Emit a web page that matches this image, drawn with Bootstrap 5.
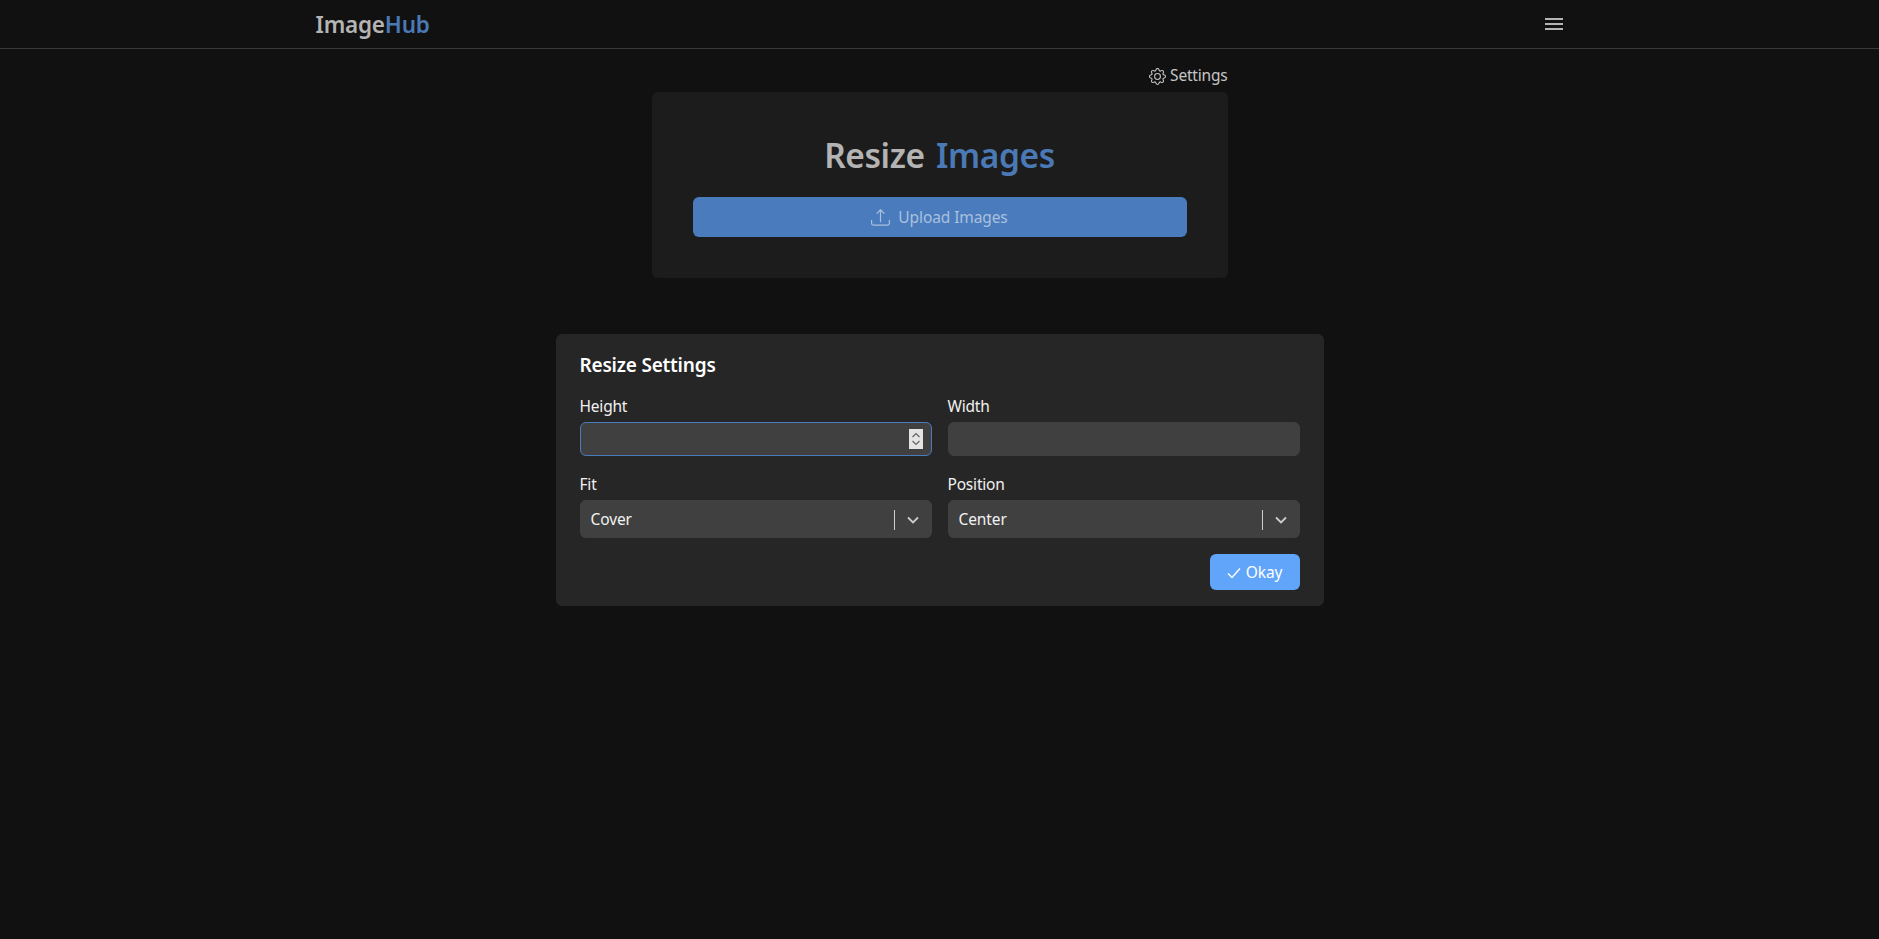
<!DOCTYPE html>
<html lang="en">
<head>
    <meta charset="utf-8">
    <title>ImageHub - Resize Images</title>
    <link href="https://cdn.jsdelivr.net/npm/bootstrap@5.3.0/dist/css/bootstrap.min.css" rel="stylesheet">
    <style>
        body { background: #111111; color: #e5e5e5; font-family: "Noto Sans", "Open Sans", sans-serif; min-height: 100vh; }
        .top-bar { height: 49px; padding: 0; border-bottom: 1px solid #3a3a3a; background: #111111; }
        .wrap-wide { max-width: 1280px; padding: 0 16px; }
        .logo { font-size: 22.5px; font-weight: 600; color: #b4b4b4; letter-spacing: -.2px; padding: 2px 0 0; margin: 0; }
        .logo span, .heading span { color: #4a79b5; }
        .menu-btn { color: #b4b4b4; border: 0; background: none; padding: 0; line-height: 0; margin-right: 1px; }
        .upload-col { width: 576px; }
        .settings-link { color: #c4c4c4; font-size: 15.5px; height: 43px; padding-top: 15px; letter-spacing: -.2px; text-decoration: none; }
        .upload-box { background: #1c1c1c; border-radius: 6px; height: 186px; padding: 40px 41px 0; border: 0; }
        .heading { font-size: 33.5px; font-weight: 600; color: #b4b4b4; line-height: 46px; margin-bottom: 19px; letter-spacing: -.4px; word-spacing: 3px; }
        .upload-btn { background: #4a7cbd; border: 0; color: #a9c0de; height: 40px; padding-top: 7px; font-size: 15.5px; border-radius: 6px; letter-spacing: -.1px; }
        .settings-box { width: 768px; margin-top: 56px; background: #262626; border: 0; border-radius: 6px; padding: 18px 24px 16px; color: #f1f1f1; }
        .settings-title { font-size: 19px; font-weight: 600; line-height: 26px; margin-bottom: 18px; letter-spacing: -.2px; color: #fff; }
        .field-row { --bs-gutter-x: 16px; --bs-gutter-y: 18px; }
        .field-label { font-size: 15.5px; line-height: 20px; margin-bottom: 6px; letter-spacing: -.2px; }
        .num-input, .num-input:focus { background: #404040; border: 1px solid #404040; border-radius: 6px; height: 34px; color: #fff; box-shadow: none; }
        .num-input.is-on, .num-input.is-on:focus { border-color: #4a7cbd; }
        .num-input::-webkit-inner-spin-button { opacity: 0; }
        .num-wrap { position: relative; }
        .spin-mark { position: absolute; right: 9px; top: 7px; width: 14px; height: 20px; background: #e4e4e4; line-height: 0; }
        .pick { background: #404040; border-radius: 6px; height: 38px; padding: 1px 10px 0 11px; font-size: 15.5px; letter-spacing: -.1px; }
        .pick-sep { width: 1px; height: 20px; background: #cfcfcf; }
        .pick-arrow { color: #cccccc; margin: 0 2px 0 11px; }
        .okay-btn { background: #60a5fa; border: 0; color: #fff; height: 36px; width: 90px; font-size: 15.5px; border-radius: 6px; padding: 1px 1px 0 0; letter-spacing: -.1px; }
        .okay-btn:hover { background: #60a5fa; color: #fff; }
    </style>
</head>
<body>

    <!-- Barra superior -->
    <nav class="navbar top-bar">
        <div class="container-fluid wrap-wide mx-auto d-flex justify-content-between align-items-center">
            <a class="navbar-brand logo" href="#">Image<span>Hub</span></a>
            <button class="menu-btn" type="button" aria-label="Menu">
                <svg width="18" height="14" viewBox="0 0 18 14" fill="none" stroke="currentColor" stroke-width="2"><path d="M0 2h18M0 7h18M0 12h18"/></svg>
            </button>
        </div>
    </nav>

    <main class="d-flex flex-column align-items-center">
        <div class="upload-col">
            <div class="d-flex justify-content-end">
                <a class="settings-link d-flex align-items-start gap-1" href="#">
                    <svg class="mt-1" width="17" height="17" viewBox="0 0 16 16" fill="currentColor">
                        <path d="M8 4.754a3.246 3.246 0 1 0 0 6.492 3.246 3.246 0 0 0 0-6.492zM5.754 8a2.246 2.246 0 1 1 4.492 0 2.246 2.246 0 0 1-4.492 0z"/>
                        <path d="M9.796 1.343c-.527-1.79-3.065-1.79-3.592 0l-.094.319a.873.873 0 0 1-1.255.52l-.292-.16c-1.64-.892-3.433.902-2.54 2.541l.159.292a.873.873 0 0 1-.52 1.255l-.319.094c-1.79.527-1.79 3.065 0 3.592l.319.094a.873.873 0 0 1 .52 1.255l-.16.292c-.892 1.64.901 3.434 2.541 2.54l.292-.159a.873.873 0 0 1 1.255.52l.094.319c.527 1.79 3.065 1.79 3.592 0l.094-.319a.873.873 0 0 1 1.255-.52l.292.16c1.64.893 3.434-.902 2.54-2.541l-.159-.292a.873.873 0 0 1 .52-1.255l.319-.094c1.79-.527 1.79-3.065 0-3.592l-.319-.094a.873.873 0 0 1-.52-1.255l.16-.292c.893-1.64-.902-3.433-2.541-2.54l-.292.159a.873.873 0 0 1-1.255-.52l-.094-.319zm-2.633.283c.246-.835 1.428-.835 1.674 0l.094.319a1.873 1.873 0 0 0 2.693 1.115l.291-.16c.764-.415 1.6.42 1.184 1.185l-.159.292a1.873 1.873 0 0 0 1.116 2.692l.318.094c.835.246.835 1.428 0 1.674l-.319.094a1.873 1.873 0 0 0-1.115 2.693l.16.291c.415.764-.42 1.6-1.185 1.184l-.291-.159a1.873 1.873 0 0 0-2.693 1.116l-.094.318c-.246.835-1.428.835-1.674 0l-.094-.319a1.873 1.873 0 0 0-2.692-1.115l-.292.16c-.764.415-1.6-.42-1.184-1.185l.159-.291A1.873 1.873 0 0 0 1.945 8.93l-.319-.094c-.835-.246-.835-1.428 0-1.674l.319-.094A1.873 1.873 0 0 0 3.06 4.377l-.16-.292c-.415-.764.42-1.6 1.185-1.184l.292.159a1.873 1.873 0 0 0 2.692-1.115l.094-.319z"/>
                    </svg>
                    Settings
                </a>
            </div>

            <!-- Subir imagenes -->
            <div class="card upload-box text-center">
                <h1 class="heading">Resize <span>Images</span></h1>
                <button type="button" class="btn upload-btn w-100 d-flex align-items-center justify-content-center gap-2">
                    <svg width="19" height="19" viewBox="0 0 16 16" fill="currentColor">
                        <path d="M.5 9.9a.5.5 0 0 1 .5.5v2.5a1 1 0 0 0 1 1h12a1 1 0 0 0 1-1v-2.5a.5.5 0 0 1 1 0v2.5a2 2 0 0 1-2 2H2a2 2 0 0 1-2-2v-2.5a.5.5 0 0 1 .5-.5z"/>
                        <path d="M7.646 1.146a.5.5 0 0 1 .708 0l3 3a.5.5 0 0 1-.708.708L8.5 2.707V11.5a.5.5 0 0 1-1 0V2.707L5.354 4.854a.5.5 0 1 1-.708-.708l3-3z"/>
                    </svg>
                    Upload Images
                </button>
            </div>
        </div>

        <!-- Ajustes -->
        <form class="card settings-box">
            <h2 class="settings-title">Resize Settings</h2>
            <div class="row field-row">
                <div class="col-6">
                    <label class="form-label field-label d-block" for="height">Height</label>
                    <div class="num-wrap">
                        <input class="form-control num-input is-on" id="height" type="number">
                        <span class="spin-mark">
                            <svg width="14" height="20" viewBox="0 0 14 20" fill="none" stroke="#666" stroke-width="1.2"><path d="M3.5 8l3.5-3.5L10.500 8M3.500 12l3.500 3.500 3.500-3.500"/></svg>
                        </span>
                    </div>
                </div>
                <div class="col-6">
                    <label class="form-label field-label d-block" for="width">Width</label>
                    <input class="form-control num-input" id="width" type="number">
                </div>
                <div class="col-6">
                    <div class="field-label">Fit</div>
                    <div class="pick d-flex align-items-center">
                        <span class="flex-grow-1">Cover</span>
                        <span class="pick-sep"></span>
                        <svg class="pick-arrow" width="14" height="14" viewBox="0 0 14 14" fill="none" stroke="currentColor" stroke-width="1.8"><path d="M2 4.5l5 5 5-5"/></svg>
                    </div>
                </div>
                <div class="col-6">
                    <div class="field-label">Position</div>
                    <div class="pick d-flex align-items-center">
                        <span class="flex-grow-1">Center</span>
                        <span class="pick-sep"></span>
                        <svg class="pick-arrow" width="14" height="14" viewBox="0 0 14 14" fill="none" stroke="currentColor" stroke-width="1.8"><path d="M2 4.5l5 5 5-5"/></svg>
                    </div>
                </div>
            </div>
            <div class="d-flex justify-content-end mt-3">
                <button type="button" class="btn okay-btn d-flex align-items-center justify-content-center gap-1">
                    <svg width="16" height="16" viewBox="0 0 16 16" fill="none" stroke="currentColor" stroke-width="1.4"><path d="M2 8.500l4 4 8-9"/></svg>
                    Okay
                </button>
            </div>
        </form>
    </main>

    <script src="https://cdn.jsdelivr.net/npm/bootstrap@5.3.0/dist/js/bootstrap.bundle.min.js"></script>
</body>
</html>
